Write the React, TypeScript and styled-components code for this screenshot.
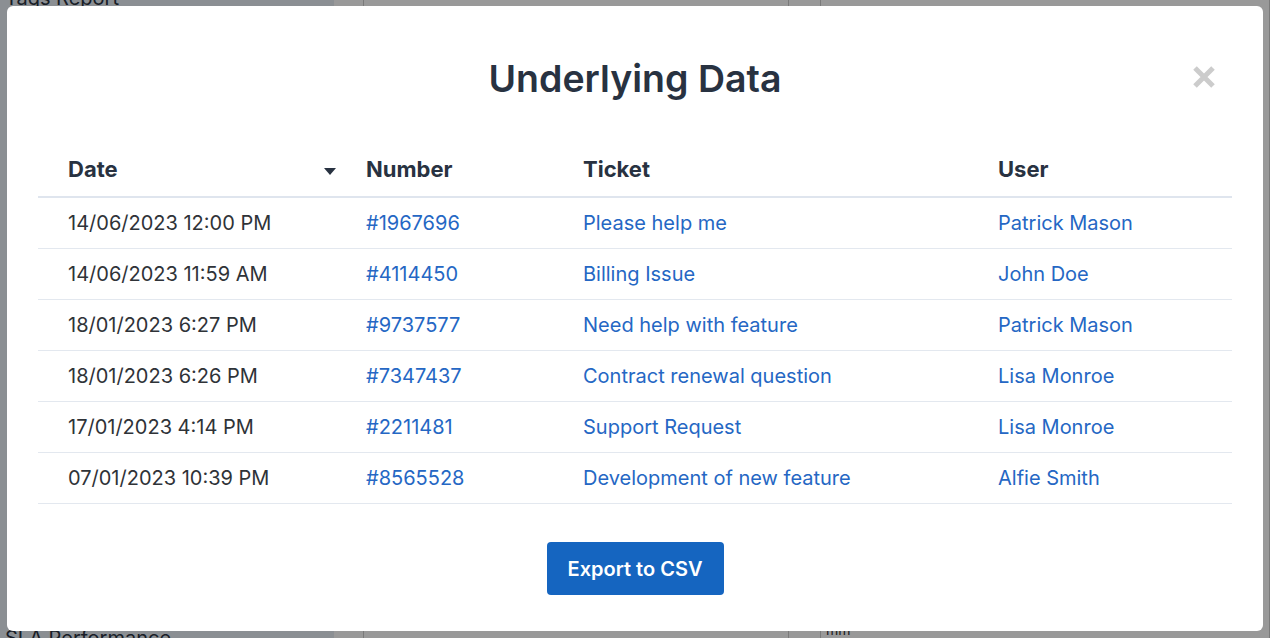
import React from 'react';
import styled, { createGlobalStyle } from 'styled-components';

interface Row {
    date: string;
    number: string;
    ticket: string;
    user: string;
}

const rows: Row[] = [
    { date: '14/06/2023 12:00 PM', number: '#1967696', ticket: 'Please help me', user: 'Patrick Mason' },
    { date: '14/06/2023 11:59 AM', number: '#4114450', ticket: 'Billing Issue', user: 'John Doe' },
    { date: '18/01/2023 6:27 PM', number: '#9737577', ticket: 'Need help with feature', user: 'Patrick Mason' },
    { date: '18/01/2023 6:26 PM', number: '#7347437', ticket: 'Contract renewal question', user: 'Lisa Monroe' },
    { date: '17/01/2023 4:14 PM', number: '#2211481', ticket: 'Support Request', user: 'Lisa Monroe' },
    { date: '07/01/2023 10:39 PM', number: '#8565528', ticket: 'Development of new feature', user: 'Alfie Smith' },
];

const GlobalStyle = createGlobalStyle`
    * { box-sizing: border-box; }
    html, body {
        margin: 0;
        padding: 0;
        height: 100%;
        overflow: hidden;
        font-family: Inter, "Liberation Sans", sans-serif;
        background: #fff;
    }
`;

const Page = styled.div`
    display: flex;
    height: 100vh;
`;

const Sidebar = styled.aside`
    width: 334px;
    background: #e8eef5;
    display: flex;
    flex-direction: column;
    justify-content: space-between;
    padding: 0 0 0 5px;
`;

const SideText = styled.div`
    font-size: 20px;
    color: #2a3342;
    line-height: 24px;
`;

const TopText = styled(SideText)`
    margin-top: -14px;
`;

const BottomText = styled(SideText)`
    margin-bottom: -12px;
`;

const Main = styled.main`
    flex: 1;
    display: grid;
    grid-template-columns: 426px 1fr;
    gap: 31px;
    padding: 0 0 0 29px;
`;

const PageCard = styled.div`
    border-left: 1px solid #ccc;
    border-right: 1px solid #ccc;
    display: flex;
    align-items: flex-end;
    padding: 0 0 0 5px;
    font-size: 14px;
    color: #333;
`;

const Overlay = styled.div`
    position: fixed;
    inset: 0;
    background: rgba(0, 0, 0, 0.4);
`;

const Modal = styled.div`
    position: fixed;
    top: 6px;
    left: 7px;
    right: 7px;
    bottom: 7px;
    background: #fff;
    border-radius: 6px;
    display: flex;
    flex-direction: column;
    align-items: center;
    padding: 51px 31px 36px;
`;

const Title = styled.h2`
    margin: 0;
    font-size: 37.5px;
    line-height: 44px;
    font-weight: 600;
    color: #283241;
`;

const CloseButton = styled.button`
    position: absolute;
    top: 59px;
    right: 47px;
    width: 24px;
    height: 24px;
    padding: 0;
    border: 0;
    background: none;
    cursor: pointer;
    display: flex;
`;

const Table = styled.div`
    align-self: stretch;
    margin-top: 41px;
    display: grid;
    grid-template-columns: 298px 217px 415px 1fr;
`;

const HeadCell = styled.div`
    height: 56px;
    display: flex;
    align-items: center;
    justify-content: space-between;
    padding: 0 0 0 30px;
    font-size: 22px;
    font-weight: 700;
    color: #283241;
    border-bottom: 2px solid #dfe5ee;
`;

const Caret = styled.span`
    width: 0;
    height: 0;
    border-left: 6.5px solid transparent;
    border-right: 6.5px solid transparent;
    border-top: 7px solid #283241;
    margin-top: 5px;
`;

const Cell = styled.div<{ $link?: boolean }>`
    height: 51px;
    display: flex;
    align-items: center;
    padding: 0 0 0 30px;
    font-size: 20px;
    color: ${({ $link }) => ($link ? '#2567c4' : '#2f3338')};
    border-bottom: 1px solid #e3e8ef;
    white-space: nowrap;
`;

const ExportButton = styled.button`
    margin-top: 38px;
    width: 177px;
    height: 54px;
    border: 0;
    border-radius: 4px;
    background: #1565c0;
    color: #fff;
    font-family: Inter, "Liberation Sans", sans-serif;
    font-size: 20px;
    font-weight: 600;
    cursor: pointer;
`;

const App: React.FC = () => (
    <>
        <GlobalStyle />
        <Page>
            <Sidebar>
                <TopText>Tags Report</TopText>
                <BottomText>SLA Performance</BottomText>
            </Sidebar>
            <Main>
                <PageCard />
                <PageCard>mm</PageCard>
            </Main>
        </Page>
        <Overlay />
        <Modal>
            <Title>Underlying Data</Title>
            <CloseButton aria-label="Close">
                <svg width="24" height="24" viewBox="0 0 24 24">
                    <path d="M3 3 L21 21 M21 3 L3 21" stroke="#cccccc" strokeWidth="5" />
                </svg>
            </CloseButton>
            <Table>
                <HeadCell>
                    Date
                    <Caret />
                </HeadCell>
                <HeadCell>Number</HeadCell>
                <HeadCell>Ticket</HeadCell>
                <HeadCell>User</HeadCell>
                {rows.map((row) => (
                    <React.Fragment key={row.number}>
                        <Cell>{row.date}</Cell>
                        <Cell $link>{row.number}</Cell>
                        <Cell $link>{row.ticket}</Cell>
                        <Cell $link>{row.user}</Cell>
                    </React.Fragment>
                ))}
            </Table>
            <ExportButton>Export to CSV</ExportButton>
        </Modal>
    </>
);

export default App;
